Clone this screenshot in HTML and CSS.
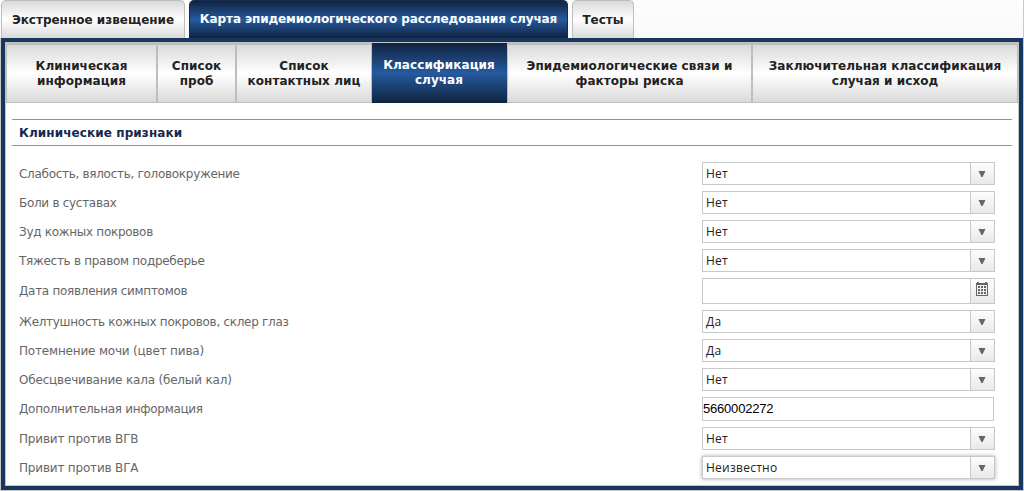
FILE: index.html
```html
<!DOCTYPE html>
<html lang="ru">
<head>
<meta charset="utf-8">
<title>Карта эпидемиологического расследования случая</title>
<link rel="stylesheet" href="styles.css">
</head>
<body>
<div class="page">
  <nav class="tabs">
    <div class="tab tab-notice"><span>Экстренное извещение</span></div>
    <div class="tab tab-card active"><span>Карта эпидемиологического расследования случая</span></div>
    <div class="tab tab-tests"><span>Тесты</span></div>
  </nav>
  <main class="panel">
    <nav class="subtabs">
      <div class="subtab"><span>Клиническая<br>информация</span></div>
      <div class="subtab"><span>Список<br>проб</span></div>
      <div class="subtab"><span>Список<br>контактных лиц</span></div>
      <div class="subtab active"><span>Классификация<br>случая</span></div>
      <div class="subtab"><span>Эпидемиологические связи и<br>факторы риска</span></div>
      <div class="subtab"><span>Заключительная классификация<br>случая и исход</span></div>
    </nav>
    <h2 class="section-title">Клинические признаки</h2>
    <div class="form">
      <div class="row"><label>Слабость, вялость, головокружение</label><div class="combo"><span>Нет</span><i class="trigger"><svg width="8" height="6"><path d="M0.5 0H7.5L4.6 6H3.4Z"/></svg></i></div></div>
      <div class="row"><label>Боли в суставах</label><div class="combo"><span>Нет</span><i class="trigger"><svg width="8" height="6"><path d="M0.5 0H7.5L4.6 6H3.4Z"/></svg></i></div></div>
      <div class="row"><label>Зуд кожных покровов</label><div class="combo"><span>Нет</span><i class="trigger"><svg width="8" height="6"><path d="M0.5 0H7.5L4.6 6H3.4Z"/></svg></i></div></div>
      <div class="row"><label>Тяжесть в правом подреберье</label><div class="combo"><span>Нет</span><i class="trigger"><svg width="8" height="6"><path d="M0.5 0H7.5L4.6 6H3.4Z"/></svg></i></div></div>
      <div class="row date-row"><label>Дата появления симптомов</label><div class="combo"><span></span><i class="trigger calendar"><svg width="12" height="14" shape-rendering="crispEdges"><path fill-rule="evenodd" d="M0 1H1V0H3V1H9V0H11V1H12V14H0ZM1 3V13H11V3Z"/><path d="M2 4h2v2h-2zM5 4h2v2h-2zM8 4h2v2h-2zM2 7h2v2h-2zM5 7h2v2h-2zM8 7h2v2h-2zM2 10h2v2h-2zM5 10h2v2h-2zM8 10h2v2h-2z"/></svg></i></div></div>
      <div class="row"><label>Желтушность кожных покровов, склер глаз</label><div class="combo"><span>Да</span><i class="trigger"><svg width="8" height="6"><path d="M0.5 0H7.5L4.6 6H3.4Z"/></svg></i></div></div>
      <div class="row"><label class="wide">Потемнение мочи (цвет пива)</label><div class="combo"><span>Да</span><i class="trigger"><svg width="8" height="6"><path d="M0.5 0H7.5L4.6 6H3.4Z"/></svg></i></div></div>
      <div class="row"><label class="wide">Обесцвечивание кала (белый кал)</label><div class="combo"><span>Нет</span><i class="trigger"><svg width="8" height="6"><path d="M0.5 0H7.5L4.6 6H3.4Z"/></svg></i></div></div>
      <div class="row text-row"><label>Дополнительная информация</label><div class="textbox">5660002272</div></div>
      <div class="row"><label class="wide">Привит против ВГВ</label><div class="combo"><span>Нет</span><i class="trigger"><svg width="8" height="6"><path d="M0.5 0H7.5L4.6 6H3.4Z"/></svg></i></div></div>
      <div class="row"><label class="wide">Привит против ВГА</label><div class="combo focused"><span>Неизвестно</span><i class="trigger"><svg width="8" height="6"><path d="M0.5 0H7.5L4.6 6H3.4Z"/></svg></i></div></div>
    </div>
  </main>
</div>
</body>
</html>
```
FILE: styles.css
```css
* { box-sizing: border-box; }
body { margin: 0; background: #fff; font-family: "DejaVu Sans", Verdana, sans-serif; }
.page { height: 491px; padding-left: 1px; border-right: 1px solid #c8c8c8; border-bottom: 1px solid #c8c8c8; background: linear-gradient(#fdfdfd, #f9f9f9 38px, #c8c8c8 38px); }
.tabs { display: flex; height: 38px; }
.tab {
  display: flex; align-items: center; justify-content: center; height: 38px;
  padding-top: 1px; border: 1px solid #bebebe; border-bottom: 0; border-radius: 5px 5px 0 0;
  background: linear-gradient(#dadada, #fff 50%, #dadada);
  color: #222; font-size: 12px; font-weight: 700; white-space: nowrap;
}
.tab-notice { width: 184px; margin-right: 4px; }
.tab-card { width: 379px; margin-right: 4px; padding: 0 0 1px; letter-spacing: -0.1px; }
.tab-tests { width: 62px; }
.active { background: linear-gradient(#10233f, #265a9f 50%, #10233f); border-color: #132b4c; color: #fff; }
.panel { height: 452px; border: 4px solid #17375f; background: #fff; box-shadow: inset 0 0 0 1px #c4c4c4; padding: 0 1px 1px; }
.subtabs { display: grid; grid-template-columns: 151px 79px 136px 135px 245px 266px; height: 61px; padding-top: 1px; background: #c4c4c4; }
.subtab {
  display: flex; align-items: center; justify-content: center; text-align: center;
  border: 1px solid #bebebe; border-top-width: 2px;
  background: linear-gradient(#dadada, #fff 50%, #dadada);
  color: #222; font-size: 12px; font-weight: 700; line-height: 15px; letter-spacing: 0.06px; white-space: nowrap;
}
.subtab.active { background: linear-gradient(#10233f, #265a9f 50%, #10233f); border: 0; padding: 0 1px 1px 0; color: #fff; }
.section-title {
  height: 27px; margin: 16px 6px; padding-left: 7px;
  border: solid #7a96c2; border-width: 1px 0;
  color: #15284b; font-size: 12px; line-height: 26px; letter-spacing: 0.1px;
}
.form { display: flex; flex-direction: column; gap: 6px; padding-left: 13px; }
.row { display: grid; grid-template-columns: 683px 293px; height: 23px; align-items: center; }
.date-row { height: 26px; }
.text-row { height: 24px; }
.row label { color: #666; font-size: 12px; letter-spacing: -0.29px; white-space: nowrap; }
.row label.wide { letter-spacing: -0.18px; }
.combo { display: grid; grid-template-columns: 1fr 24px; height: 100%; border: 1px solid #c8c8c8; background: #fff; }
.combo span { padding-left: 3px; color: #222; font: 12px/21px "Open Sans", "Noto Sans", sans-serif; letter-spacing: 0.25px; }
.trigger { display: flex; align-items: center; justify-content: center; padding: 1px 1px 0 0; border-left: 1px solid #c8c8c8; background: linear-gradient(#fdfdfd, #e9e9e9); }
.trigger svg { fill: #666; }
.calendar { padding: 0 1px 4px 0; }
.textbox { width: 292px; height: 24px; border: 1px solid #c8c8c8; color: #000; font: 13px/22px "Liberation Sans", Arial, sans-serif; letter-spacing: -0.2px; }
.focused { box-shadow: 0 0 4px #aaa; }
```
